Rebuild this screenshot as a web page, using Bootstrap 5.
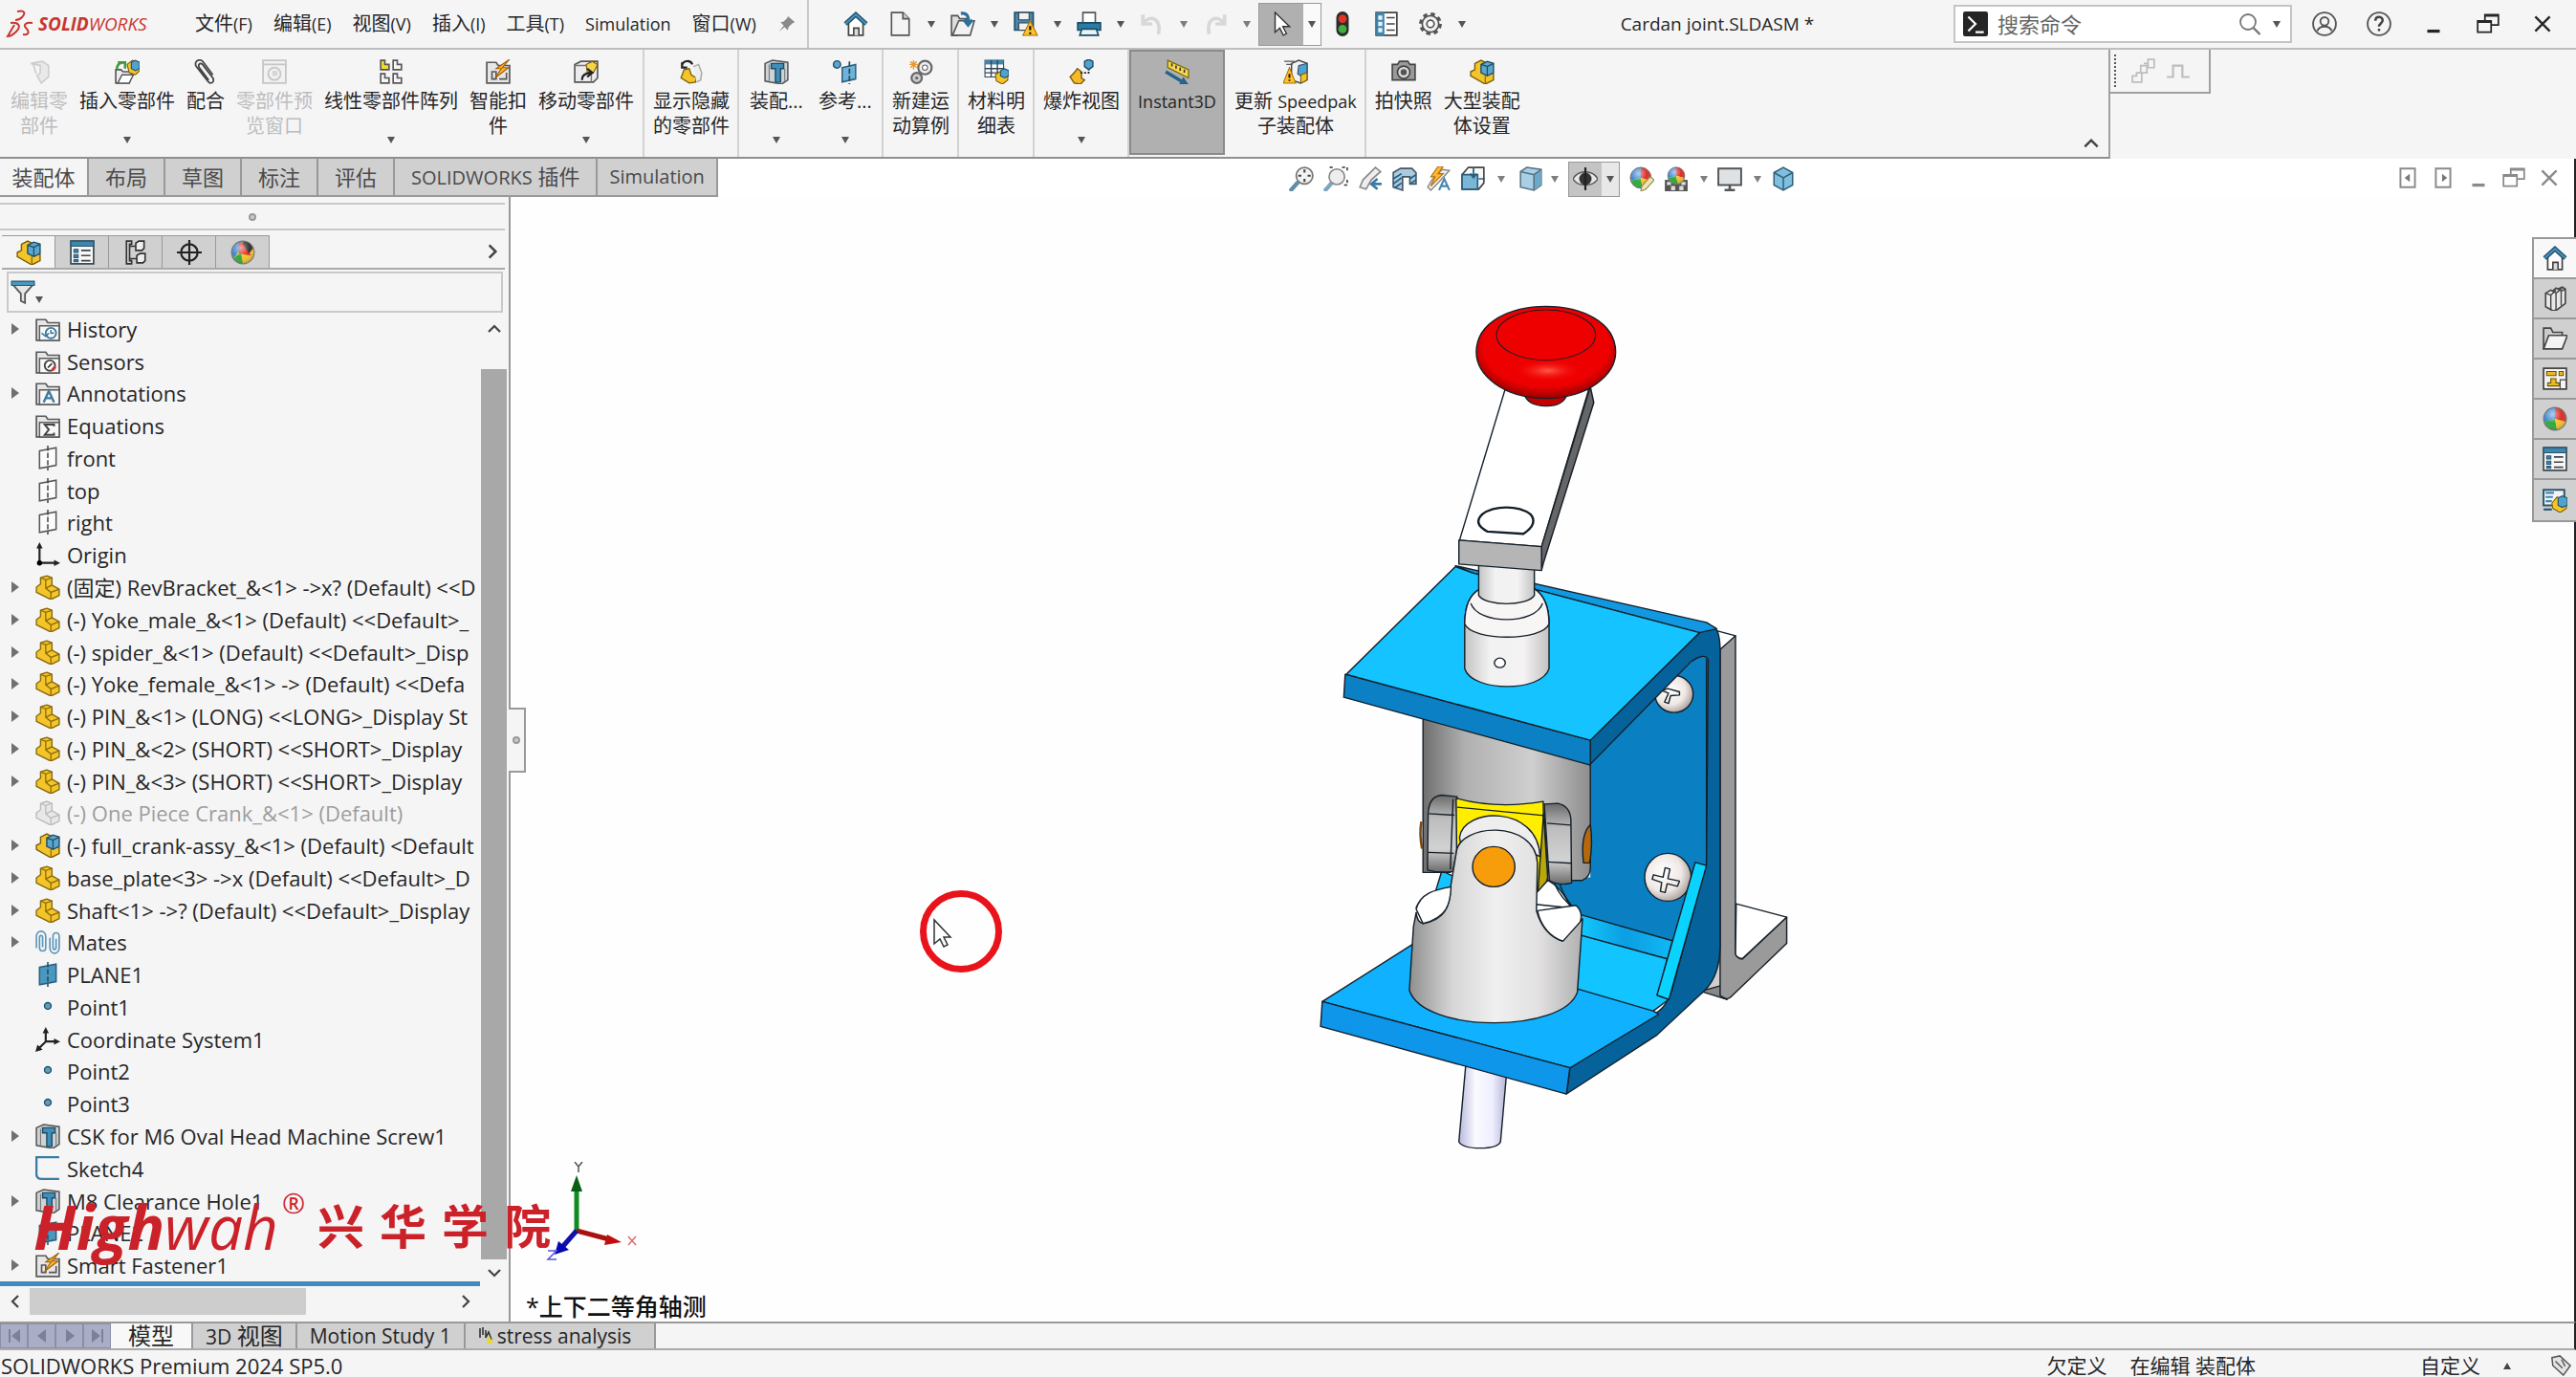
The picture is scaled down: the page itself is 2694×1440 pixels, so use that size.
<!DOCTYPE html>
<html lang="zh-CN">
<head>
<meta charset="utf-8">
<meta name="viewport" content="width=device-width, initial-scale=1">
<title>Cardan joint.SLDASM - SOLIDWORKS</title>
<link href="https://cdn.jsdelivr.net/npm/bootstrap@5.3.0/dist/css/bootstrap.min.css" rel="stylesheet">
<style>
:root{--face:#f5f5f6;--line:#a0a0a0;--soft:#c9c9c9;--tabgray:#d0d0d1;--ink:#262626}
body{font-family:"Open Sans","Noto Sans CJK SC",sans-serif;font-size:20px;line-height:26px;color:var(--ink);background:var(--face)}
button{border:0;background:none;padding:0;color:inherit;font:inherit;display:inline-flex;align-items:center;justify-content:center}
a{color:inherit;text-decoration:none}
svg{display:block;flex:none}
.ico{width:26px;height:26px}
.tri{width:8px;height:7px}
.latin{font-size:18px}
.titlebar{height:52px;border-bottom:2px solid #bdbdbd}
.brandmark{color:#c9352f;font-size:19px;font-style:italic;width:204px;padding-left:6px}
.mainmenu{gap:22px}
.quick{border-left:2px solid var(--soft);height:50px;padding-left:36px;margin-left:11px}
.quick .solo{margin-right:20px}
.quick .arrowed{gap:16px;margin-right:16px}
.cursorbox{border:1px solid #999;height:45px;margin-left:-8px;margin-right:9px}
.cursorbox .on{background:#b0b0b0;width:46px;height:100%}
.cursorbox .more{background:#fafafa;width:18px;height:100%}
.doctitle{font-size:19px}
.finder{width:354px;height:40px;border:2px solid #c4c4c4;background:#fff;padding:0 10px 0 8px}
.finder input{border:0;outline:0;background:none;font-size:22px;min-width:0;color:#555}
.finder input::placeholder{color:#666;opacity:1}
.winctl{gap:31px;padding:0 22px 0 21px}
.ribbonrow{height:114px}
.ribbon{width:2207px;border-right:2px solid var(--line);border-bottom:2px solid #8f8f8f}
.grp{padding:0 2px 0 3px;border-right:2px solid #d2d2d2}
.grp:first-child{padding-left:5px;padding-right:3px}
.grp:last-of-type{border:0}
.tool{flex-direction:column;justify-content:flex-start;padding:10px 6px 0;position:relative;text-align:center;height:110px}
.tool .cap{line-height:26px;margin-top:5px}
.tool .tri{position:absolute;bottom:12px;left:calc(50% - 4px)}
.tool.short{min-width:72px}
.tool.pressed{background:#b0b0b0;border:2px solid #8a8a8a;padding:8px 6px 0;width:100px}
.tool:disabled{color:#bdbdbd}
.floater{width:105px;height:46px;border-right:2px solid var(--line);border-bottom:2px solid var(--line);padding-left:4px;gap:10px}
.floater .grip{border-left:2px dotted #555;height:34px;margin-right:6px}
.tabrow{height:40px;background:#fff}
.cmdtab{height:40px;background:var(--tabgray);border-right:2px solid #999;border-bottom:2px solid #999;font-size:22px;padding:0 17px;color:#4a4a4a}
.cmdtab .latin{font-size:20px}
.cmdtab.on{background:var(--face);border-bottom-color:#999;width:93px;padding:0}
.hud{gap:10px;padding-left:597px;padding-top:2px}
.hud .eyebox{border:1px solid #999;height:37px;background:#c4c4c4}
.hud .eyebox .more{width:18px;height:100%;background:#e8e8e8}
.docctl{gap:11px;padding-right:13px;color:#8a8a8a}
.sidebar{width:534px;border-right:2px solid #999;position:relative;padding-top:6px}
.handle{height:29px;border-top:2px solid var(--soft);border-bottom:2px solid var(--soft);margin-right:4px}
.knob{width:8px;height:8px;border:2px solid #999;border-radius:50%;background:#ccc}
.mgr{height:36px;margin:5px 4px 0 2px;border-bottom:2px solid #aaa}
.mgr button{width:56px;background:var(--tabgray);border:2px solid #999;border-width:1px 1px 0 0}
.mgr button.on{background:var(--face)}
.mgr .expand{margin-left:auto;width:26px;background:none;border:0}
.filter{height:43px;border:2px solid var(--soft);margin:2px 6px 0 7px;padding-left:2px}
.filter input{border:0;background:none;outline:0;min-width:0}
.tree{font-size:22px;line-height:28px;border-bottom:5px solid #4489bd;width:502px}
.tree li{flex:1 1 0;min-height:0;white-space:nowrap}
.tree .tw{width:37px;padding-left:12px;flex:none}
.tree .tw svg{width:8px;height:12px}
.tree .ico{margin-right:7px}
.tree .off{color:#9d9d9d}
.vbar{width:27px;margin-right:2px}
.vbar .up{height:59px;padding-top:8px;align-items:flex-start}
.vbar .thumb{background:#a8a8a8}
.vbar .down{height:28px}
.hbar{height:28px;margin:2px 30px 7px 0}
.hbar .thumb{width:289px;background:#cdcdcd}
.hbar button{width:31px}
.splitter{position:absolute;left:532px;top:534px;width:18px;height:68px;border:2px solid #999;border-left:0;background:var(--face);z-index:2}
.view3d{background:#fefefe;position:relative}
.model{position:absolute;left:calc(50% - 273px);top:85px;width:560px;height:933px}
.pointer{position:absolute;left:calc(20% - 4px);top:725px;width:86px;height:86px}
.triad{position:absolute;left:30px;bottom:55px;width:110px;height:112px}
.viewname{position:absolute;left:16px;bottom:1px;font-size:25px;line-height:30px;color:#111;font-weight:500}
.taskpane{position:absolute;right:-2px;top:42px;width:46px;border:2px solid #999;border-right:0;z-index:2}
.taskpane button{height:42px;background:var(--tabgray);border-bottom:2px solid #999}
.taskpane button:first-child{background:#f8f8f8}
.taskpane button:last-child{border:0}
.rim{border-right:2px solid #222}
.watermark{position:absolute;left:35px;bottom:113px;z-index:5;color:#cb2129;height:88px;pointer-events:none}
.watermark .hw{font-size:64px;line-height:88px;font-style:italic}
.watermark .reg{font-size:29px;line-height:38px;margin-left:4px}
.watermark .cn{font-size:49px;line-height:86px;font-weight:700;gap:16px;margin-left:13px}
.sheets{height:30px;border-top:2px solid #999;border-bottom:2px solid #aaa;font-size:21px}
.sheets .nav4 button{width:29px;background:#a9adc6;border:1px solid #8a8ea8;color:#7d8198}
.sheets .sheet{background:var(--tabgray);border-right:2px solid #999;padding:0 13px}
.sheets .sheet.on{background:#f8f8f8;font-size:24px;padding:0 18px}
.sheets .cj{font-size:24px}
.statusbar{height:28px;font-size:22px;padding-left:1px;padding-top:4px;line-height:24px}
.statusbar .cj{font-size:21px}
.statusbar .custom{margin-left:172px}
</style>
</head>
<body class="vh-100 d-flex flex-column overflow-hidden position-relative">

<svg width="0" height="0" class="position-absolute" aria-hidden="true">
<defs>
<radialGradient id="gBall" cx=".4" cy=".3" r=".8"><stop offset="0" stop-color="#fff" stop-opacity=".6"/><stop offset=".5" stop-color="#fff" stop-opacity="0"/><stop offset="1" stop-opacity=".35"/></radialGradient>
<symbol id="tri" viewBox="0 0 8 7"><path d="M0 0h8L4 7z" fill="#555"/></symbol>
<symbol id="twist" viewBox="0 0 8 12"><path d="M0 0l8 6-8 6z" fill="#707070"/></symbol>
<symbol id="chev" viewBox="0 0 24 24"><path d="M8 4l8 8-8 8" fill="none" stroke="#444" stroke-width="3"/></symbol>
<symbol id="home" viewBox="0 0 24 24"><path d="M5 11v12h14V11l-7-7z" fill="#fff" stroke="#444" stroke-width="1.6"/><path d="M10 23v-7h5v7" fill="#ddd" stroke="#444" stroke-width="1.5"/><path d="M2 12L12 3l10 9" fill="none" stroke="#1f4f6b" stroke-width="4.4"/><path d="M2 12L12 3l10 9" fill="none" stroke="#4a90b8" stroke-width="2"/></symbol>
<symbol id="doc" viewBox="0 0 24 24"><path d="M4 1h11l6 6v16H4z" fill="#f4f4f4" stroke="#555" stroke-width="1.5"/><path d="M15 1v6h6" fill="#ccc" stroke="#555" stroke-width="1.5"/></symbol>
<symbol id="open" viewBox="0 0 24 24"><path d="M1 23V4h6l2 3h6v5l-8 11z" fill="#ddd" stroke="#555" stroke-width="1.5"/><path d="M2 23L8 9h15l-4 14z" fill="#f2f2f2" stroke="#555" stroke-width="1.5"/><path d="M10 2c6-1 8 3 7 9m-4-3l4 5 4-5" fill="none" stroke="#2a7299" stroke-width="3"/></symbol>
<symbol id="save" viewBox="0 0 24 24"><path d="M1 1h18v17H1z" fill="#4b87a8" stroke="#234f68" stroke-width="1.5"/><path d="M5 1h10v7H5zM5 11h10v7H5z" fill="#f2f2f2" stroke="#345"/><path d="M16 9l7 14H9z" fill="#ffc22c" stroke="#a87300"/><path d="M16 14v4m0 2v2" stroke="#111" stroke-width="2"/></symbol>
<symbol id="print" viewBox="0 0 24 24"><path d="M6 1h12v10H6z" fill="#fff" stroke="#555" stroke-width="1.5"/><path d="M1 11h22v7H1z" fill="#2e7ba6" stroke="#1b4c66" stroke-width="1.5"/><path d="M5 17h14l2 6H3z" fill="#e9f3f8" stroke="#1b4c66" stroke-width="1.5"/></symbol>
<symbol id="undo" viewBox="0 0 24 24"><path d="M3 3v9h9M4 11C10 3 21 6 18 22" fill="none" stroke="#cfcfcf" stroke-width="3.4"/></symbol>
<symbol id="cursor" viewBox="0 0 24 24"><path d="M6 1v19l4.500-4 3.500 7 3-1.500-3.500-7H20z" fill="#fff" stroke="#333" stroke-width="1.3"/></symbol>
<symbol id="traffic" viewBox="0 0 24 24"><rect x="6" y="0" width="12" height="24" rx="6" fill="#2c2c2c"/><circle cx="12" cy="7" r="4" fill="#e33323"/><circle cx="12" cy="17" r="4" fill="#3fb13b"/></symbol>
<symbol id="list" viewBox="0 0 24 24"><path d="M2 1h20v22H2z" fill="#fff" stroke="#444" stroke-width="1.6"/><path d="M2 1h8v22H2z" fill="#3f86ad"/><path d="M4 4h4v4H4zM4 10h4v4H4zM4 16h4v4H4z" fill="#e6f2f8"/><path d="M12 6h8M12 12h8M12 18h8" stroke="#444" stroke-width="1.6"/></symbol>
<symbol id="props" viewBox="0 0 24 24"><path d="M1 1h22v22H1z" fill="#f7f7f7" stroke="#3d4a52" stroke-width="1.6"/><path d="M1 1h22v5H1z" fill="#3f86ad" stroke="#27566f"/><path d="M4 9h4v3H4zM4 14h4v3H4zM4 19h4v2H4z" fill="#3f86ad" stroke="#27566f"/><path d="M11 10h9M11 15h9M11 20h9" stroke="#444" stroke-width="1.5"/></symbol>
<symbol id="gear" viewBox="0 0 24 24"><circle cx="12" cy="12" r="9.500" fill="none" stroke="#555" stroke-width="3" stroke-dasharray="4 3.460"/><circle cx="12" cy="12" r="8" fill="#f3f3f3" stroke="#555" stroke-width="1.6"/><circle cx="12" cy="12" r="3.500" fill="#fff" stroke="#555" stroke-width="1.6"/></symbol>
<symbol id="prompt" viewBox="0 0 24 24"><rect width="24" height="24" rx="2" fill="#262626"/><path d="M5 5l7 7-7 7M12 20h8" fill="none" stroke="#fff" stroke-width="2"/></symbol>
<symbol id="mag" viewBox="0 0 24 24"><circle cx="10" cy="10" r="8" fill="none" stroke="#777" stroke-width="1.8"/><path d="M15.500 16l7 7" stroke="#777" stroke-width="2.400"/></symbol>
<symbol id="user" viewBox="0 0 24 24"><circle cx="12" cy="12" r="11" fill="none" stroke="#555" stroke-width="1.700"/><circle cx="12" cy="9.500" r="4" fill="none" stroke="#555" stroke-width="1.700"/><path d="M5 19c2-6 12-6 14 0" fill="none" stroke="#555" stroke-width="1.700"/></symbol>
<symbol id="help" viewBox="0 0 24 24"><circle cx="12" cy="12" r="11" fill="none" stroke="#555" stroke-width="1.700"/><path d="M8.500 9c0-5 7-4.500 7-.5 0 3-3.500 3-3.500 6m0 2v2.500" fill="none" stroke="#444" stroke-width="2.300"/></symbol>
<symbol id="wmin" viewBox="0 0 24 24"><path d="M6 19h12" stroke="currentColor" stroke-width="3"/></symbol>
<symbol id="wres" viewBox="0 0 24 24"><path d="M9 9V3h13v10h-7M2 9h13v11H2z" fill="none" stroke="currentColor" stroke-width="1.600"/><path d="M9 4h13M2 10h13" stroke="currentColor" stroke-width="2"/></symbol>
<symbol id="wclose" viewBox="0 0 24 24"><path d="M5 5l14 14M19 5L5 19" stroke="currentColor" stroke-width="2.200"/></symbol>
<symbol id="part" viewBox="0 0 24 24"><path d="M1 12l4-3V3l6-2 5 2v7l7 4v6l-8 4L1 17z" fill="#f3c52a" stroke="#8a6a0a" stroke-width="1.300" stroke-linejoin="round"/><path d="M5 3l5 2 6-2M10 5v8l5 4 8-3M15 17v7M10 13l6-3" fill="none" stroke="#8a6a0a" stroke-width="1.200"/></symbol>
<symbol id="partoff" viewBox="0 0 24 24"><path d="M1 12l4-3V3l6-2 5 2v7l7 4v6l-8 4L1 17z" fill="#e8e8e8" stroke="#bbb" stroke-width="1.300"/><path d="M5 3l5 2 6-2M10 5v8l5 4 8-3M15 17v7M10 13l6-3" fill="none" stroke="#bbb" stroke-width="1.200"/></symbol>
<symbol id="asm" viewBox="0 0 24 24"><path d="M1 12l4-2V4l6-3 4 2v8l8 3v6l-8 4L1 16z" fill="#f3c52a" stroke="#7a5d08" stroke-width="1.300"/><path d="M11 5l6-3 6 2v9l-6 3-6-3z" fill="#5ba7cf" stroke="#1f4b64" stroke-width="1.300"/><path d="M11 5l6 2 6-3M17 7v9" fill="none" stroke="#1f4b64" stroke-width="1.200"/><path d="M15 16v8" stroke="#7a5d08"/></symbol>
<symbol id="folder" viewBox="0 0 24 24"><path d="M1 23V3h9l2 3h11v17z" fill="#e6e6e6" stroke="#5a5a5a" stroke-width="1.600"/><path d="M4 9h19v14H4z" fill="#f8f8f8" stroke="#5a5a5a" stroke-width="1.400"/></symbol>
<symbol id="fHist" viewBox="0 0 24 24"><use href="#folder"/><circle cx="15" cy="16" r="5" fill="#fff" stroke="#3f7a9c" stroke-width="1.700"/><path d="M15 13v3h3M6 16l4 3 3-3" fill="none" stroke="#3f7a9c" stroke-width="1.500"/></symbol>
<symbol id="fSens" viewBox="0 0 24 24"><use href="#folder"/><circle cx="14" cy="16" r="5" fill="#fff" stroke="#444" stroke-width="1.700"/><path d="M12 18l4-4" stroke="#333" stroke-width="1.600"/><path d="M16 20a5 5 0 0 0 3-3" stroke="#d33" stroke-width="3" fill="none"/></symbol>
<symbol id="fAnn" viewBox="0 0 24 24"><use href="#folder"/><path d="M8 21l5-11 5 11M10 17h7" fill="none" stroke="#3f7a9c" stroke-width="2.200"/></symbol>
<symbol id="fEq" viewBox="0 0 24 24"><use href="#folder"/><path d="M18 13v-2H9l4 5-4 5h9v-2" fill="none" stroke="#444" stroke-width="1.800"/></symbol>
<symbol id="plane" viewBox="0 0 24 24"><path d="M4 5l16-3v17L4 22z" fill="#fcfcfc" stroke="#555" stroke-width="1.400"/><path d="M12 0v24" stroke="#444" stroke-width="1.400" stroke-dasharray="5 2"/></symbol>
<symbol id="planeb" viewBox="0 0 24 24"><path d="M4 5l16-3v17L4 22z" fill="#4b97be" stroke="#2a5f7d" stroke-width="1.400"/><path d="M12 0v24" stroke="#1f4b64" stroke-width="1.400" stroke-dasharray="5 2"/></symbol>
<symbol id="origin" viewBox="0 0 24 24"><path d="M4 4v16h16" fill="none" stroke="#222" stroke-width="2"/><path d="M4 0l3 6H1zM24 20l-6 3v-6z" fill="#222"/><circle cx="4" cy="20" r="2.500"/></symbol>
<symbol id="coord" viewBox="0 0 24 24"><path d="M10 4v10h10M10 14l-7 7" fill="none" stroke="#222" stroke-width="2"/><path d="M10 0l3 6H7zM24 14l-6 3v-6zM0 24l2-7 5 5z" fill="#222"/></symbol>
<symbol id="mates" viewBox="0 0 24 24"><path d="M1 7v11M1 7c0-7 9-7 9 0v10c0 5-6 5-6 0V8c0-3 3-3 3 0v9M14 8v9c0 8 9 8 9 0V7c0-5-6-5-6 0v10c0 3 3 3 3 0V9" fill="none" stroke="#5a95b8" stroke-width="1.500"/></symbol>
<symbol id="point" viewBox="0 0 24 24"><circle cx="12" cy="11" r="3.200" fill="#5f9cc0" stroke="#234f68" stroke-width="1.300"/></symbol>
<symbol id="hole" viewBox="0 0 24 24"><path d="M1 4l7-3 15 2v17l-6 4-16-3z" fill="#cfd3d6" stroke="#555" stroke-width="1.400"/><path d="M5 5v16M20 9v12" stroke="#777"/><path d="M7 4h12v5h-3v13h-5V9H7z" fill="#3f8fb9" stroke="#1f4b64" stroke-width="1.300"/></symbol>
<symbol id="sketch" viewBox="0 0 24 24"><path d="M23 1H1v16q0 5 5 5h17" fill="none" stroke="#3c7ba3" stroke-width="2.200"/></symbol>
<symbol id="smart" viewBox="0 0 24 24"><path d="M1 23V3h9l2 3h11v17z" fill="#e6e6e6" stroke="#5a5a5a" stroke-width="1.600"/><path d="M6 12h4v7H6zM13 19h7v-6" fill="none" stroke="#555" stroke-width="1.500"/><path d="M23 0L10 9h5l-6 9 13-10h-6z" fill="#ffb62e" stroke="#a35d00"/></symbol>
<symbol id="editp" viewBox="0 0 24 24"><path d="M4 4l9 2v7l-3 3 4 7 7-6V6l-6-4zM6 4l3 10" fill="#e9e9e9" stroke="#cdcdcd" stroke-width="1.500"/></symbol>
<symbol id="insert" viewBox="0 0 24 24"><path d="M1 23V10h5l2 2h9l-3 11z" fill="#eee" stroke="#555" stroke-width="1.500"/><path d="M3 23l4-8h11l-4 8z" fill="#fff" stroke="#555" stroke-width="1.300"/><path d="M2 10c0-5 3-7 7-7M3 3h7v6" fill="none" stroke="#3e9a3a" stroke-width="2.400"/><path d="M12 5l5-4 7 2v8l-4 4-6-2z" fill="#f3c52a" stroke="#7a5d08"/><path d="M16 3l4-2 4 2v6l-4 2-4-2z" fill="#4fa3d1" stroke="#1f4b64"/></symbol>
<symbol id="clip" viewBox="0 0 24 24"><path d="M15 20L6 8C4 5 7 3 9 5l10 13c2 4-2 7-5 3L3 7C0 2 7-2 10 3l9 12" fill="none" stroke="#444" stroke-width="1.600"/></symbol>
<symbol id="preview" viewBox="0 0 24 24"><path d="M1 1h22v22H1zM1 5h22" fill="#f1f1f1" stroke="#c6c6c6" stroke-width="1.700"/><circle cx="12" cy="14" r="6" fill="none" stroke="#c6c6c6" stroke-width="1.700"/><path d="M10 11h5v5h-5z" fill="#d6d6d6"/></symbol>
<symbol id="pattern" viewBox="0 0 24 24"><path d="M2 1h4v4h4v5H2z" fill="#f3dc2a" stroke="#555" stroke-width="1.500"/><path d="M14 1h4v4h4v5h-8zM2 14h4v4h4v5H2zM14 14h4v4h4v5h-8z" fill="#f6f6f6" stroke="#555" stroke-width="1.500"/></symbol>
<symbol id="move" viewBox="0 0 24 24"><path d="M1 5l6-3h16v16l-4 4H1z" fill="#ececec" stroke="#555" stroke-width="1.500"/><path d="M1 6h16v16" fill="none" stroke="#777" stroke-width="1.300"/><path d="M12 5l6-3 5 3-4 8-6-1z" fill="#f3d54a" stroke="#7a5d08"/><path d="M8 20c0-5 4-7 9-7m-4-4l5 4-5 4" fill="none" stroke="#222" stroke-width="2"/></symbol>
<symbol id="showhide" viewBox="0 0 24 24"><path d="M2 18l3-8 5-1 2 6 5 3-1 4-6 1z" fill="#f3c52a" stroke="#7a5d08" stroke-width="1.200"/><path d="M14 7l5-2 3 8-1 7-4 2" fill="#eee" stroke="#aaa" stroke-width="1.400"/><path d="M3 7c0-6 8-7 10-2M3 3v5h5" fill="none" stroke="#222" stroke-width="2"/></symbol>
<symbol id="refg" viewBox="0 0 24 24"><circle cx="4" cy="5" r="3.500" fill="#5ba7cf" stroke="#1f4b64" stroke-width="1.300"/><path d="M9 8l13-3v14L9 22z" fill="#6fb4d8" stroke="#2a5f7d" stroke-width="1.400"/><path d="M16 2v22" stroke="#1f4b64" stroke-width="1.600" stroke-dasharray="5 2"/></symbol>
<symbol id="motion" viewBox="0 0 24 24"><circle cx="16" cy="8" r="6.500" fill="#eee" stroke="#666" stroke-width="2"/><circle cx="16" cy="8" r="2.500" fill="#fff" stroke="#666"/><circle cx="8" cy="18" r="5" fill="#ccc" stroke="#666" stroke-width="2"/><circle cx="8" cy="18" r="1.500" fill="#666"/><path d="M5 1v9M1 5h9M2 2l6 6M8 2L2 8" stroke="#e8972b" stroke-width="1.300"/></symbol>
<symbol id="bom" viewBox="0 0 24 24"><path d="M1 1h18v16H1z" fill="#fff" stroke="#345"/><path d="M1 1h18v4H1z" fill="#3f86ad"/><path d="M1 9h18M1 13h18M7 1v16M13 1v16" stroke="#345" stroke-width="1.300"/><path d="M11 15l4-3 8 1v7l-5 4-6-3z" fill="#f3c52a" stroke="#7a5d08"/><path d="M16 11l4-2 4 2v5l-4 2-4-2z" fill="#4fa3d1" stroke="#1f4b64"/></symbol>
<symbol id="explode" viewBox="0 0 24 24"><path d="M1 17l4-4 3-4 4 3v6l3 2-4 4-6-1z" fill="#f3b92a" stroke="#7a5d08" stroke-width="1.300"/><path d="M15 2l4-2 4 2v5l-4 3-4-3z" fill="#4fa3d1" stroke="#1f4b64" stroke-width="1.300"/><path d="M11 13h8v-3" fill="none" stroke="#222" stroke-dasharray="2 1.500" stroke-width="1.500"/></symbol>
<symbol id="instant" viewBox="0 0 24 24"><path d="M3 1l20 9v8L3 8z" fill="#f8d84a" stroke="#7a6a10" stroke-width="1.200"/><path d="M7 4v3M11 6v3M15 8v3M19 10v3" stroke="#333" stroke-width="1.500"/><path d="M1 12l15 9" stroke="#24648a" stroke-width="3"/><path d="M23 24l-9 0 4-7z" fill="#24648a"/></symbol>
<symbol id="speed" viewBox="0 0 24 24"><path d="M8 4l7-3 8 3v16l-6 3-9-3z" fill="#f2f2f2" stroke="#444" stroke-width="1.300"/><path d="M15 6l8-2v9l-6 3-3-2z" fill="#4fa3d1" stroke="#1f4b64"/><path d="M17 15l6-2v7l-6 3z" fill="#f3c52a" stroke="#7a5d08"/><path d="M6 8l6 15H0z" fill="#ffc22c" stroke="#a87300"/><path d="M6 14v4m0 1.500V21" stroke="#111" stroke-width="1.800"/><path d="M1 2h10M3 5h6" stroke="#555" stroke-width="1.300"/></symbol>
<symbol id="camera" viewBox="0 0 24 24"><path d="M1 5h5l2-3h8l2 3h5v15H1z" fill="#9a9a9a" stroke="#444" stroke-width="1.500"/><circle cx="12" cy="12.500" r="6" fill="#ddd" stroke="#444" stroke-width="1.600"/><circle cx="12" cy="12.500" r="3" fill="#555"/></symbol>
<symbol id="zfit" viewBox="0 0 24 24"><path d="M9 15l-8 9" stroke="#5f8dab" stroke-width="4"/><circle cx="15" cy="9" r="8" fill="#f3f3f3" stroke="#777" stroke-width="1.600"/><path d="M15 3v3M15 12v3M9 9h3M18 9h3" stroke="#444" stroke-width="2"/></symbol>
<symbol id="zarea" viewBox="0 0 24 24"><path d="M9 1H6M23 4V1h-5M23 13v5h-3" fill="none" stroke="#333" stroke-width="1.400" stroke-dasharray="3 2"/><path d="M8 16l-7 8" stroke="#7da6bf" stroke-width="4"/><circle cx="13" cy="10" r="7.500" fill="#eee" stroke="#888" stroke-width="1.500"/></symbol>
<symbol id="prev" viewBox="0 0 24 24"><path d="M17 1l5 4-9 8-5 9-6-2 3-7z" fill="#eee" stroke="#888" stroke-width="1.500"/><path d="M23 17h-8m4-5l-6 5 6 5" fill="none" stroke="#3c7ba3" stroke-width="2.500"/></symbol>
<symbol id="section" viewBox="0 0 24 24"><path d="M1 6l7-4h11l4 4v11h-6v-7H10v13l-9-3z" fill="#a9cbdd" stroke="#456" stroke-width="1.500"/><path d="M1 12l8-5M1 17l8-6M2 21l7-5M17 12l6-4M17 17l6-4" stroke="#1f5c80" stroke-width="1.500"/></symbol>
<symbol id="dynann" viewBox="0 0 24 24"><path d="M15 3l7 1-10 11-8 8-3-3 4-7z" fill="#eee" stroke="#888" stroke-width="1.300"/><path d="M11 0L4 10h4l-4 9 12-12h-5l5-7z" fill="#ffb62e" stroke="#b06d10"/><path d="M12 23l5-11 5 11m-8-4h7" fill="none" stroke="#4a88b0" stroke-width="2"/></symbol>
<symbol id="orient" viewBox="0 0 24 24"><path d="M7 1h15v15l-5 6H1V8z" fill="#f8f8f8" stroke="#444" stroke-width="1.500"/><path d="M1 8h15v14H1z" fill="#7ab6d6" stroke="#2a5f7d" stroke-width="1.500"/><path d="M12 1v9m-3-3l3 4 3-4M23 12h-6" fill="none" stroke="#2a5f7d" stroke-width="1.600"/></symbol>
<symbol id="dispst" viewBox="0 0 24 24"><path d="M2 5l6-4 14 2v15l-7 5L2 20z" fill="#a7d0e6" stroke="#56707e" stroke-width="1.400"/><path d="M15 8l7-5v15l-7 5z" fill="#6fa9c9"/><path d="M2 5l13 3 7-5M15 8v15" fill="none" stroke="#56707e" stroke-width="1.400"/></symbol>
<symbol id="eye" viewBox="0 0 24 24"><path d="M0 12C5 3 19 3 24 12 19 20 5 20 0 12z" fill="#e8e8e8" stroke="#555" stroke-width="1.300"/><circle cx="12" cy="12" r="6" fill="#333"/><path d="M12 1v22" stroke="#222" stroke-width="2"/></symbol>
<symbol id="ball" viewBox="0 0 24 24"><path d="M12 12V1a11 11 0 0 1 10.500 14z" fill="#d92f26"/><path d="M12 12V1A11 11 0 0 0 1.500 15z" fill="#3f86d0"/><path d="M12 12L1.500 15A11 11 0 0 0 14 23z" fill="#2fa83a"/><path d="M12 12l10.500 3A11 11 0 0 1 14 23z" fill="#f2c32c"/><circle cx="12" cy="12" r="11" fill="url(#gBall)" stroke="#777"/></symbol>
<symbol id="ballfm" viewBox="0 0 24 24"><circle cx="12" cy="12" r="11" fill="#f2c32c"/><path d="M12 1A11 11 0 0 0 3 18l6-8z" fill="#3f86d0"/><path d="M3 18l7-6 2 11A11 11 0 0 1 3 18z" fill="#2fa83a"/><path d="M8 2l5 1 7 12-12-2z" fill="#d92f26"/><path d="M12 1c5 0 9 3 10 7l-4 5-6-9z" fill="#333"/><circle cx="12" cy="12" r="11" fill="url(#gBall)" stroke="#777"/></symbol>
<symbol id="balled" viewBox="0 0 24 24"><use href="#ball" width="22" height="22"/><path d="M11 24l1-5 8-9 4 3-8 9z" fill="#f6e2b0" stroke="#885"/></symbol>
<symbol id="scene" viewBox="0 0 24 24"><path d="M1 13h22v11H1z" fill="#555"/><path d="M3 15h4v3H3zM17 15h4v3h-4zM7 19h4v4H7zM15 19h4v4h-4z" fill="#ddd"/><use href="#ball" x="3" width="18" height="18"/></symbol>
<symbol id="monitor" viewBox="0 0 24 24"><path d="M1 2h22v16H1z" fill="#dfe2e4" stroke="#555" stroke-width="1.800"/><path d="M12 18v4M7 23h10" stroke="#555" stroke-width="2.400"/></symbol>
<symbol id="cube" viewBox="0 0 24 24"><path d="M3 6l9-5 9 5v12l-9 5-9-5z" fill="#7fbfe0" stroke="#33617a" stroke-width="1.400"/><path d="M3 6l9 5 9-5M12 11v12" fill="none" stroke="#33617a" stroke-width="1.400"/></symbol>
<symbol id="pageL" viewBox="0 0 24 24"><path d="M5 3h14v18H5z" fill="none" stroke="#8a8a8a" stroke-width="1.800"/><path d="M14 8v8l-5-4z" fill="#777"/></symbol>
<symbol id="pageR" viewBox="0 0 24 24"><path d="M5 3h14v18H5z" fill="none" stroke="#8a8a8a" stroke-width="1.800"/><path d="M11 8v8l5-4z" fill="#777"/></symbol>
<symbol id="config" viewBox="0 0 24 24"><path d="M3 1h5v3H6v16h2v3H3zM6 6h7M6 18h7" fill="none" stroke="#333" stroke-width="1.500"/><path d="M12 3l3-2h5v7l-2 2h-6zM13 15l3-2h5v7l-2 2h-6z" fill="#eee" stroke="#333" stroke-width="1.500"/></symbol>
<symbol id="target" viewBox="0 0 24 24"><circle cx="12" cy="12" r="8" fill="none" stroke="#222" stroke-width="2"/><path d="M12 0v24M0 12h24" stroke="#222" stroke-width="2"/></symbol>
<symbol id="funnel" viewBox="0 0 24 24"><path d="M2 4h20l-8 9v9l-4-2v-7z" fill="#e6e6e6" stroke="#555" stroke-width="1.600"/><path d="M1 1h22v4H1z" fill="#4b97be" stroke="#27566f"/></symbol>
<symbol id="books" viewBox="0 0 24 24"><path d="M3 7l5-3 2 1 3-3 2 1 4-2 3 2v14l-8 6-4 1-7-4z" fill="#e9e9e9" stroke="#444" stroke-width="1.500"/><path d="M3 7l5 2 5-5M8 9v14M10 5l3 2 6-5M13 7v16M15 3l3 2 4-2M18 5v14" fill="none" stroke="#444" stroke-width="1.300"/></symbol>
<symbol id="fold2" viewBox="0 0 24 24"><path d="M1 22V2h7l2 4h9v4" fill="#ccc" stroke="#444" stroke-width="1.500"/><path d="M1 22L6 9h18l-5 13z" fill="#f4f4f4" stroke="#444" stroke-width="1.500"/></symbol>
<symbol id="palette" viewBox="0 0 24 24"><path d="M1 2h22v20H1z" fill="#f4f4f4" stroke="#444" stroke-width="1.600"/><path d="M4 5h9v4H4zM16 5h4v4h-4zM5 19v-3h3v-4h5v4h3v3z" fill="#e8bb25" stroke="#6c5408"/><path d="M17 22v-9h6" fill="none" stroke="#444"/></symbol>
<symbol id="forum" viewBox="0 0 24 24"><path d="M1 2h20v15H1z" fill="#f4f4f4" stroke="#27566f" stroke-width="1.800"/><path d="M3 5h8M3 9h7M3 13h6" stroke="#3f86ad" stroke-width="2"/><path d="M1 21h8" stroke="#27566f" stroke-width="2"/><path d="M9 15l5-6 9 4v7l-6 4-7-4z" fill="#f3c52a" stroke="#7a5d08"/><path d="M15 10l4-2 5 2v7l-5 2-4-2z" fill="#4fa3d1" stroke="#1f4b64"/></symbol>
<symbol id="tag" viewBox="0 0 24 24"><path d="M2 3l9-2 12 11-8 11L3 12z" fill="#e4e4e4" stroke="#555" stroke-width="1.600"/><path d="M6 7l8 8M13 5l4 8" stroke="#555" stroke-width="1.500"/></symbol>
<symbol id="pin" viewBox="0 0 24 24"><path d="M13 2l9 8-3 1-5 5-1 4-4-4-7 6 6-8-4-4 4-1 5-5z" fill="#8a8a8a"/></symbol>
</defs>
</svg>

<header class="titlebar d-flex align-items-center flex-shrink-0">
  <a href="#" class="brandmark d-flex align-items-center gap-1">
    <svg width="30" height="30" viewBox="0 0 30 30" fill="none" stroke="#c9352f" stroke-width="2"><path d="M12 2c8-2 9 2 5 6-3 3-5 3-7 3M5 14c8-1 12 3 6 9-3 3-6 5-9 5l7-12M28 14c-7-1-10 2-7 5s5 8-3 7"/></svg>
    <span><b>SOLID</b>WORKS</span></a>
  <nav class="mainmenu d-flex align-items-center">
    <a href="#">文件<span class="latin">(F)</span></a><a href="#">编辑<span class="latin">(E)</span></a><a href="#">视图<span class="latin">(V)</span></a><a href="#">插入<span class="latin">(I)</span></a><a href="#">工具<span class="latin">(T)</span></a><a href="#"><span class="latin">Simulation</span></a><a href="#">窗口<span class="latin">(W)</span></a>
    <button aria-label="固定"><svg width="20" height="22"><use href="#pin"/></svg></button>
  </nav>
  <div class="quick d-flex align-items-center">
    <button class="solo" aria-label="主页"><svg class="ico"><use href="#home"/></svg></button>
    <button class="arrowed" aria-label="新建"><svg class="ico"><use href="#doc"/></svg><svg class="tri"><use href="#tri"/></svg></button>
    <button class="arrowed" aria-label="打开"><svg class="ico"><use href="#open"/></svg><svg class="tri"><use href="#tri"/></svg></button>
    <button class="arrowed" aria-label="保存"><svg class="ico"><use href="#save"/></svg><svg class="tri"><use href="#tri"/></svg></button>
    <button class="arrowed" aria-label="打印"><svg class="ico"><use href="#print"/></svg><svg class="tri"><use href="#tri"/></svg></button>
    <button class="arrowed opacity-75" aria-label="撤消"><svg class="ico"><use href="#undo"/></svg><svg class="tri"><use href="#tri"/></svg></button>
    <button class="arrowed opacity-75" aria-label="重做"><svg class="ico" viewBox="0 0 24 24"><use href="#undo" transform="matrix(-1 0 0 1 24 0)"/></svg><svg class="tri"><use href="#tri"/></svg></button>
    <div class="cursorbox d-flex"><button class="on" aria-label="选择"><svg class="ico"><use href="#cursor"/></svg></button><button class="more" aria-label="选择选项"><svg class="tri"><use href="#tri"/></svg></button></div>
    <button class="solo" aria-label="重建"><svg class="ico"><use href="#traffic"/></svg></button>
    <button class="solo" aria-label="文件属性"><svg class="ico"><use href="#list"/></svg></button>
    <button class="arrowed" aria-label="选项"><svg class="ico"><use href="#gear"/></svg><svg class="tri"><use href="#tri"/></svg></button>
  </div>
  <div class="doctitle ms-auto me-auto">Cardan joint.SLDASM *</div>
  <label class="finder d-flex align-items-center gap-2"><svg class="ico"><use href="#prompt"/></svg><input class="flex-grow-1" type="text" placeholder="搜索命令" aria-label="搜索命令"><svg width="24" height="26"><use href="#mag"/></svg><svg class="tri ms-1"><use href="#tri"/></svg></label>
  <div class="winctl d-flex align-items-center">
    <button aria-label="登录"><svg class="ico"><use href="#user"/></svg></button><button aria-label="帮助"><svg class="ico"><use href="#help"/></svg></button><button aria-label="最小化"><svg class="ico"><use href="#wmin"/></svg></button><button aria-label="还原"><svg class="ico"><use href="#wres"/></svg></button><button aria-label="关闭"><svg class="ico"><use href="#wclose"/></svg></button>
  </div>
</header>

<div class="ribbonrow d-flex flex-shrink-0">
  <div class="ribbon d-flex">
    <div class="grp d-flex">
      <button class="tool" disabled><svg class="ico"><use href="#editp"/></svg><span class="cap">编辑零<br>部件</span></button>
      <button class="tool"><svg class="ico"><use href="#insert"/></svg><span class="cap">插入零部件</span><svg class="tri"><use href="#tri"/></svg></button>
      <button class="tool"><svg class="ico"><use href="#clip"/></svg><span class="cap">配合</span></button>
      <button class="tool" disabled><svg class="ico"><use href="#preview"/></svg><span class="cap">零部件预<br>览窗口</span></button>
      <button class="tool"><svg class="ico"><use href="#pattern"/></svg><span class="cap">线性零部件阵列</span><svg class="tri"><use href="#tri"/></svg></button>
      <button class="tool"><svg class="ico"><use href="#smart"/></svg><span class="cap">智能扣<br>件</span></button>
      <button class="tool"><svg class="ico"><use href="#move"/></svg><span class="cap">移动零部件</span><svg class="tri"><use href="#tri"/></svg></button>
    </div>
    <div class="grp d-flex"><button class="tool"><svg class="ico"><use href="#showhide"/></svg><span class="cap">显示隐藏<br>的零部件</span></button></div>
    <div class="grp d-flex">
      <button class="tool short"><svg class="ico"><use href="#hole"/></svg><span class="cap">装配...</span><svg class="tri"><use href="#tri"/></svg></button>
      <button class="tool short"><svg class="ico"><use href="#refg"/></svg><span class="cap">参考...</span><svg class="tri"><use href="#tri"/></svg></button>
    </div>
    <div class="grp d-flex"><button class="tool"><svg class="ico"><use href="#motion"/></svg><span class="cap">新建运<br>动算例</span></button></div>
    <div class="grp d-flex"><button class="tool"><svg class="ico"><use href="#bom"/></svg><span class="cap">材料明<br>细表</span></button></div>
    <div class="grp d-flex"><button class="tool"><svg class="ico"><use href="#explode"/></svg><span class="cap">爆炸视图</span><svg class="tri"><use href="#tri"/></svg></button></div>
    <button class="tool pressed"><svg class="ico"><use href="#instant"/></svg><span class="cap latin">Instant3D</span></button>
    <div class="grp d-flex ps-1"><button class="tool"><svg class="ico"><use href="#speed"/></svg><span class="cap">更新 <span class="latin">Speedpak</span><br>子装配体</span></button></div>
    <div class="grp d-flex">
      <button class="tool"><svg class="ico"><use href="#camera"/></svg><span class="cap">拍快照</span></button>
      <button class="tool"><svg class="ico"><use href="#asm"/></svg><span class="cap">大型装配<br>体设置</span></button>
    </div>
    <button class="ms-auto align-self-end me-2 mb-1" aria-label="折叠"><svg width="20" height="20" viewBox="0 0 24 24"><use href="#chev" transform="rotate(-90 12 12)"/></svg></button>
  </div>
  <div class="floater d-flex align-items-center">
    <span class="grip"></span>
    <button disabled aria-label="爆炸直线"><svg class="ico" viewBox="0 0 24 24" fill="none" stroke="#bdbdbd" stroke-width="1.600"><path d="M1 23v-6h4v-3h5v9zM9 14V7h6v7zM16 1h6v8h-6zM12 5h4"/></svg></button>
    <button disabled aria-label="步路线"><svg class="ico" viewBox="0 0 24 24" fill="none" stroke="#bdbdbd" stroke-width="2"><path d="M1 18h6V7h9v11h7"/></svg></button>
  </div>
</div>

<div class="tabrow d-flex flex-shrink-0 rim">
  <button class="cmdtab on">装配体</button><button class="cmdtab">布局</button><button class="cmdtab">草图</button><button class="cmdtab">标注</button><button class="cmdtab">评估</button><button class="cmdtab"><span><span class="latin">SOLIDWORKS</span> 插件</span></button><button class="cmdtab px-2"><span class="latin px-1">Simulation</span></button>
  <div class="hud d-flex align-items-center">
    <button aria-label="整屏显示全图"><svg class="ico"><use href="#zfit"/></svg></button><button aria-label="局部放大"><svg class="ico"><use href="#zarea"/></svg></button><button aria-label="上一视图"><svg class="ico"><use href="#prev"/></svg></button><button aria-label="剖面视图"><svg class="ico"><use href="#section"/></svg></button><button aria-label="动态注解"><svg class="ico"><use href="#dynann"/></svg></button>
    <button class="gap-2" aria-label="视图定向"><svg class="ico me-1"><use href="#orient"/></svg><svg class="tri opacity-75"><use href="#tri"/></svg></button>
    <button class="gap-2 ms-1" aria-label="显示样式"><svg class="ico"><use href="#dispst"/></svg><svg class="tri opacity-75"><use href="#tri"/></svg></button>
    <div class="eyebox d-flex"><button aria-label="隐藏所有类型"><svg class="ico mx-1"><use href="#eye"/></svg></button><button class="more" aria-label="隐藏选项"><svg class="tri"><use href="#tri"/></svg></button></div>
    <button aria-label="编辑外观"><svg class="ico"><use href="#balled"/></svg></button>
    <button class="gap-2" aria-label="应用布景"><svg class="ico me-1"><use href="#scene"/></svg><svg class="tri opacity-75"><use href="#tri"/></svg></button>
    <button class="gap-2" aria-label="视图设置"><svg class="ico me-1"><use href="#monitor"/></svg><svg class="tri opacity-75"><use href="#tri"/></svg></button>
    <button aria-label="3D 视图"><svg class="ico"><use href="#cube"/></svg></button>
  </div>
  <div class="docctl d-flex align-items-center ms-auto">
    <button aria-label="上一窗口"><svg class="ico"><use href="#pageL"/></svg></button><button aria-label="下一窗口"><svg class="ico"><use href="#pageR"/></svg></button><button aria-label="最小化文档"><svg class="ico"><use href="#wmin"/></svg></button><button aria-label="还原文档"><svg class="ico"><use href="#wres"/></svg></button><button aria-label="关闭文档"><svg class="ico"><use href="#wclose"/></svg></button>
  </div>
</div>

<main class="d-flex flex-grow-1" style="min-height:0">
  <aside class="sidebar d-flex flex-column flex-shrink-0">
    <div class="handle d-flex align-items-center justify-content-center"><span class="knob"></span></div>
    <div class="mgr d-flex">
      <button class="on" aria-label="FeatureManager"><svg class="ico"><use href="#asm"/></svg></button><button aria-label="PropertyManager"><svg class="ico"><use href="#props"/></svg></button><button aria-label="ConfigurationManager"><svg class="ico"><use href="#config"/></svg></button><button aria-label="DimXpertManager"><svg class="ico"><use href="#target"/></svg></button><button aria-label="DisplayManager"><svg class="ico"><use href="#ballfm"/></svg></button>
      <button class="expand" aria-label="展开"><svg width="20" height="20"><use href="#chev"/></svg></button>
    </div>
    <label class="filter d-flex align-items-center"><svg class="ico"><use href="#funnel"/></svg><svg class="tri mt-3"><use href="#tri"/></svg><input class="flex-grow-1" type="text" aria-label="过滤器"></label>
    <div class="d-flex flex-grow-1" style="min-height:0">
      <ul class="tree list-unstyled d-flex flex-column mb-0">
        <li class="d-flex align-items-center"><span class="tw"><svg><use href="#twist"/></svg></span><svg class="ico"><use href="#fHist"/></svg>History</li>
        <li class="d-flex align-items-center"><span class="tw"></span><svg class="ico"><use href="#fSens"/></svg>Sensors</li>
        <li class="d-flex align-items-center"><span class="tw"><svg><use href="#twist"/></svg></span><svg class="ico"><use href="#fAnn"/></svg>Annotations</li>
        <li class="d-flex align-items-center"><span class="tw"></span><svg class="ico"><use href="#fEq"/></svg>Equations</li>
        <li class="d-flex align-items-center"><span class="tw"></span><svg class="ico"><use href="#plane"/></svg>front</li>
        <li class="d-flex align-items-center"><span class="tw"></span><svg class="ico"><use href="#plane"/></svg>top</li>
        <li class="d-flex align-items-center"><span class="tw"></span><svg class="ico"><use href="#plane"/></svg>right</li>
        <li class="d-flex align-items-center"><span class="tw"></span><svg class="ico"><use href="#origin"/></svg>Origin</li>
        <li class="d-flex align-items-center"><span class="tw"><svg><use href="#twist"/></svg></span><svg class="ico"><use href="#part"/></svg>(固定) RevBracket_&amp;&lt;1&gt; -&gt;x? (Default) &lt;&lt;D</li>
        <li class="d-flex align-items-center"><span class="tw"><svg><use href="#twist"/></svg></span><svg class="ico"><use href="#part"/></svg>(-) Yoke_male_&amp;&lt;1&gt; (Default) &lt;&lt;Default&gt;_</li>
        <li class="d-flex align-items-center"><span class="tw"><svg><use href="#twist"/></svg></span><svg class="ico"><use href="#part"/></svg>(-) spider_&amp;&lt;1&gt; (Default) &lt;&lt;Default&gt;_Disp</li>
        <li class="d-flex align-items-center"><span class="tw"><svg><use href="#twist"/></svg></span><svg class="ico"><use href="#part"/></svg>(-) Yoke_female_&amp;&lt;1&gt; -&gt; (Default) &lt;&lt;Defa</li>
        <li class="d-flex align-items-center"><span class="tw"><svg><use href="#twist"/></svg></span><svg class="ico"><use href="#part"/></svg>(-) PIN_&amp;&lt;1&gt; (LONG) &lt;&lt;LONG&gt;_Display St</li>
        <li class="d-flex align-items-center"><span class="tw"><svg><use href="#twist"/></svg></span><svg class="ico"><use href="#part"/></svg>(-) PIN_&amp;&lt;2&gt; (SHORT) &lt;&lt;SHORT&gt;_Display</li>
        <li class="d-flex align-items-center"><span class="tw"><svg><use href="#twist"/></svg></span><svg class="ico"><use href="#part"/></svg>(-) PIN_&amp;&lt;3&gt; (SHORT) &lt;&lt;SHORT&gt;_Display</li>
        <li class="off d-flex align-items-center"><span class="tw"></span><svg class="ico"><use href="#partoff"/></svg>(-) One Piece Crank_&amp;&lt;1&gt; (Default)</li>
        <li class="d-flex align-items-center"><span class="tw"><svg><use href="#twist"/></svg></span><svg class="ico"><use href="#asm"/></svg>(-) full_crank-assy_&amp;&lt;1&gt; (Default) &lt;Default</li>
        <li class="d-flex align-items-center"><span class="tw"><svg><use href="#twist"/></svg></span><svg class="ico"><use href="#part"/></svg>base_plate&lt;3&gt; -&gt;x (Default) &lt;&lt;Default&gt;_D</li>
        <li class="d-flex align-items-center"><span class="tw"><svg><use href="#twist"/></svg></span><svg class="ico"><use href="#part"/></svg>Shaft&lt;1&gt; -&gt;? (Default) &lt;&lt;Default&gt;_Display</li>
        <li class="d-flex align-items-center"><span class="tw"><svg><use href="#twist"/></svg></span><svg class="ico"><use href="#mates"/></svg>Mates</li>
        <li class="d-flex align-items-center"><span class="tw"></span><svg class="ico"><use href="#planeb"/></svg>PLANE1</li>
        <li class="d-flex align-items-center"><span class="tw"></span><svg class="ico"><use href="#point"/></svg>Point1</li>
        <li class="d-flex align-items-center"><span class="tw"></span><svg class="ico"><use href="#coord"/></svg>Coordinate System1</li>
        <li class="d-flex align-items-center"><span class="tw"></span><svg class="ico"><use href="#point"/></svg>Point2</li>
        <li class="d-flex align-items-center"><span class="tw"></span><svg class="ico"><use href="#point"/></svg>Point3</li>
        <li class="d-flex align-items-center"><span class="tw"><svg><use href="#twist"/></svg></span><svg class="ico"><use href="#hole"/></svg>CSK for M6 Oval Head Machine Screw1</li>
        <li class="d-flex align-items-center"><span class="tw"></span><svg class="ico"><use href="#sketch"/></svg>Sketch4</li>
        <li class="d-flex align-items-center"><span class="tw"><svg><use href="#twist"/></svg></span><svg class="ico"><use href="#hole"/></svg>M8 Clearance Hole1</li>
        <li class="d-flex align-items-center"><span class="tw"></span><svg class="ico"><use href="#planeb"/></svg>PLANE2</li>
        <li class="d-flex align-items-center"><span class="tw"><svg><use href="#twist"/></svg></span><svg class="ico"><use href="#smart"/></svg>Smart Fastener1</li>
      </ul>
      <div class="vbar d-flex flex-column ms-auto">
        <button class="up" aria-label="向上"><svg width="18" height="18" viewBox="0 0 24 24"><use href="#chev" transform="rotate(-90 12 12)"/></svg></button>
        <div class="thumb flex-grow-1"></div>
        <button class="down" aria-label="向下"><svg width="18" height="18" viewBox="0 0 24 24"><use href="#chev" transform="rotate(90 12 12)"/></svg></button>
      </div>
    </div>
    <div class="hbar d-flex">
      <button aria-label="向左"><svg width="18" height="18" viewBox="0 0 24 24"><use href="#chev" transform="rotate(180 12 12)"/></svg></button>
      <div class="thumb"></div>
      <button class="ms-auto" aria-label="向右"><svg width="18" height="18"><use href="#chev"/></svg></button>
    </div>
    <div class="splitter d-flex align-items-center justify-content-center"><span class="knob"></span></div>
  </aside>

  <section class="view3d flex-grow-1 rim">
    <svg class="model" viewBox="0 0 1568 2800" preserveAspectRatio="none" stroke="#15202a" stroke-width="4" stroke-linejoin="round">
      <defs>
        <linearGradient id="mW"><stop offset="0" stop-color="#c4c4c4"/><stop offset=".3" stop-color="#f2f2f2"/><stop offset=".7" stop-color="#f4f2f2"/><stop offset="1" stop-color="#c2c2c2"/></linearGradient>
        <linearGradient id="mG"><stop offset="0" stop-color="#6f6f6f"/><stop offset=".25" stop-color="#b0b0b0"/><stop offset=".65" stop-color="#cfcfcf"/><stop offset="1" stop-color="#8d8d8d"/></linearGradient>
        <linearGradient id="mL"><stop offset="0" stop-color="#8f8f8f"/><stop offset=".25" stop-color="#d6d6d6"/><stop offset=".5" stop-color="#f0f0f0"/><stop offset=".75" stop-color="#e2e0e0"/><stop offset="1" stop-color="#b0b0b0"/></linearGradient>
        <linearGradient id="mE" x2="0" y2="1"><stop offset="0" stop-color="#6a6a6a"/><stop offset=".3" stop-color="#bdbdbd"/><stop offset=".7" stop-color="#d2d2d2"/><stop offset="1" stop-color="#6a6a6a"/></linearGradient>
        <linearGradient id="mS"><stop offset="0" stop-color="#b9b9dd"/><stop offset=".35" stop-color="#fafaff"/><stop offset=".7" stop-color="#eef"/><stop offset="1" stop-color="#b4b4d6"/></linearGradient>
        <linearGradient id="mB"><stop offset="0" stop-color="#12c8ff"/><stop offset=".5" stop-color="#0c9ee2"/><stop offset="1" stop-color="#10b8f6"/></linearGradient>
        <radialGradient id="mR" cx=".5" cy=".42" r=".6"><stop offset="0" stop-color="#f00000"/><stop offset=".75" stop-color="#ee0000"/><stop offset="1" stop-color="#8e0000"/></radialGradient>
        <radialGradient id="mH"><stop offset="0" stop-color="#ff5a4a"/><stop offset="1" stop-color="#f00000" stop-opacity="0"/></radialGradient>
        <radialGradient id="mP" cx=".4" cy=".4" r=".65"><stop offset="0" stop-color="#fff"/><stop offset=".6" stop-color="#efe8e5"/><stop offset="1" stop-color="#a59d9a"/></radialGradient>
      </defs>
      <path d="M1235 2235l50-120 20 148z" fill="#cfcfcf"/><path d="M1228 2238l60-18 17 43z" fill="#888"/>
      <path d="M1275 1106l55 16-45 45z" fill="#fff"/>
      <path d="M1285 1165l45-43v998q5 17 20 17l130-132v82l-165 170q-10 10-30-6z" fill="#9a9a9a"/>
      <path d="M1332 1963l148 42-130 130q-18-2-20-15z" fill="#fff"/>
      <path d="M900 1500l325-320 60 20v900H880L780 1880h125z" fill="#0a80c2" stroke="none"/>
      <path d="M1245 1195v650" fill="none"/>
      <path d="M450 1930l20-70 40 20v40z" fill="#14c3ff"/>
      <ellipse cx="1150" cy="1305" rx="56" ry="58" fill="url(#mP)"/>
      <path d="M1122 1330l12-28-20-8 18-6 34 10v10l-26 2-6 24z" fill="none"/>
      <ellipse cx="1132" cy="1880" rx="68" ry="75" fill="url(#mP)"/>
      <path d="M1090 1872l28 8 6-30 14 4-6 30 34 8-6 16-30-8-6 28-14-4 4-28-28-10z" fill="none"/>
      <path d="M875 1997l270 82-14 58-260-76z" fill="url(#mB)"/>
      <path d="M870 2060l260 76-28 115 33 12-50 40-225-70z" fill="#12c4ff"/>
      <path d="M1225 1112q60-60 60 60v927q-2 90-45 136l-140 140-265 185 10-82 245-168q38-20 55-80l100-392 5-640q-10-25-50 5L905 1525v-77z" fill="#05629b"/>
      <path d="M1212 1833l33 10-110 420-35-13z" fill="#0ad3ff"/>
      <path d="M540 2470l-20 240q10 20 62 20t60-20l18-220z" fill="url(#mS)"/>
      <path d="M120 2270l265-180 475 138 230 72 15 10-260 168z" fill="#10b2ff"/>
      <path d="M120 2270l725 208-10 82-720-212z" fill="#0d96ea"/>
      <path d="M415 1350v515h80l10-200 265 15 10 210h100q25-10 25-40V1400z" fill="url(#mG)"/>
      <path d="M410 1705q-6 40 2 85" fill="none" stroke="#7a4a10" stroke-width="7"/>
      <path d="M905 1715q-30 30-20 120h18q10-60 2-120z" fill="#b3680e"/>
      <path d="M430 1680q2-55 40-58l45 5v170l-12 65q-40 5-75-5z" fill="url(#mE)"/>
      <path d="M770 1650l40-2q35 8 38 50l2 200q-35 10-65-8z" fill="url(#mE)"/>
      <path d="M432 1680l75 5M430 1802l75 3M778 1710l70 6M780 1832l70 4M503 1635l-8 220" fill="none"/>
      <path d="M512 1632q120 35 255 10l5 290-15 15-242-2z" fill="#ffee00"/>
      <path d="M515 1660l255 26" fill="none"/>
      <path d="M768 1680l12 200-15 65-15 0z" fill="#b8a80a"/>
      <path d="M780 1890q40 20 70 90l30 40-20 60-40 10-78-40-4-110z" fill="#fff"/>
      <path d="M745 1965l110 12M800 1900q20 50 60 80M815 1900q15 50 50 85" fill="none"/>
      <path d="M395 1975q15-40 70-55l35-10-5 90-60 30z" fill="#fff"/>
      <path d="M522 1755c10-95 228-105 236 60l-20-10H530z" fill="#eee"/>
      <path d="M375 2235l12-200 8-45q2 30 20 35c60-10 80-50 80-110l17-110c5-95 230-110 238 30l-3 150q20 75 75 95l60-70-15 230c-40 130-450 130-492 -5z" fill="url(#mL)"/>
      <path d="M395 1980l20 45c70-20 80-60 82-115-50 10-90 20-102 70zM750 1985c10 50 40 85 75 95l50-60q10-30-12-52z" fill="#fff"/>
      <ellipse cx="622" cy="1847" rx="62" ry="63" fill="#f79d0c"/>
      <path d="M510 902l735 178 30 20-50 12L560 925z" fill="#1198e0"/>
      <path d="M187 1243l718 207v78l-722-213z" fill="#0b80c4"/>
      <path d="M190 1243L510 905l50 20 665 187-320 338z" fill="#14c3ff"/>
      <path d="M537 1085q0-85 45-110h160q42 30 42 110v140c-20 75-225 75-247 0z" fill="url(#mW)"/>
      <path d="M537 1085q0-85 45-110h160q42 30 42 110c-20 55-225 55-247 0z" fill="#f8f5f5"/>
      <path d="M555 1020c20 68 190 68 210 0" fill="none"/>
      <path d="M578 880h163v115c-20 35-143 35-163 0z" fill="url(#mW)"/>
      <ellipse cx="640" cy="1207" rx="16" ry="15" fill="#fff"/>
      <path d="M655 350L522 822l240 20L900 350z" fill="#fff"/>
      <path d="M905 340l10 50L768 892l-6 24v-74z" fill="#666"/>
      <path d="M520 822l242 20v75l-242-20z" fill="#b5b5b5"/>
      <path d="M604 795q-45-25-15-55c35-28 105-28 140 0q25 30-20 62z" fill="#fff" stroke-width="7"/>
      <path d="M712 365q10 35 62 36t62-36z" fill="#c20000"/>
      <path d="M571 232C571 40 979 40 979 232c0 70-80 145-205 145S571 302 571 232z" fill="url(#mR)"/>
      <ellipse cx="780" cy="290" rx="100" ry="35" fill="url(#mH)" stroke="none"/>
      <ellipse cx="775" cy="178" rx="145" ry="79" fill="#ee0000" stroke-width="3"/>
    </svg>
    <svg class="pointer" viewBox="0 0 86 86"><circle cx="43" cy="43" r="39.500" fill="none" stroke="#e8131b" stroke-width="7"/><path d="M15 31v25l6-5 4 8 4-2-4-8h7z" fill="#fff" stroke="#333" stroke-width="1.500"/></svg>
    <svg class="triad" viewBox="0 0 110 112"><path d="M39 72V30" stroke="#118a22" stroke-width="5"/><path d="M39 14l6 17H33z" fill="#0a5f16"/><path d="M39 72l34 9" stroke="#a11" stroke-width="5"/><path d="M86 84l-18 3 3-11z" fill="#c00d0d"/><path d="M39 72L25 88" stroke="#11a" stroke-width="5"/><path d="M16 97l4-14 11 9z" fill="#0808b0"/><path d="M37 0l4 5 4-5M41 5v6" fill="none" stroke="#555" stroke-width="1.500"/><path d="M93 78l8 9m0-9l-8 9" fill="none" stroke="#e06a6a" stroke-width="1.500"/><path d="M9 93h9l-9 9h9" fill="none" stroke="#5555dd" stroke-width="1.500"/></svg>
    <div class="viewname">*上下二等角轴测</div>
    <div class="taskpane d-flex flex-column">
      <button aria-label="资源"><svg class="ico"><use href="#home"/></svg></button><button aria-label="设计库"><svg class="ico"><use href="#books"/></svg></button><button aria-label="文件探索器"><svg class="ico"><use href="#fold2"/></svg></button><button aria-label="视图调色板"><svg class="ico"><use href="#palette"/></svg></button><button aria-label="外观"><svg class="ico"><use href="#ball"/></svg></button><button aria-label="自定义属性"><svg class="ico"><use href="#props"/></svg></button><button aria-label="论坛"><svg class="ico"><use href="#forum"/></svg></button>
    </div>
  </section>
</main>

<div class="watermark d-flex" aria-hidden="true">
  <span class="hw"><b>High</b>wah</span><span class="reg">®</span>
  <span class="cn d-flex"><span>兴</span><span>华</span><span>学</span><span>院</span></span>
</div>

<div class="sheets d-flex flex-shrink-0 rim">
  <div class="nav4 d-flex"><button aria-label="首个"><svg width="16" height="16" viewBox="0 0 16 16" fill="currentColor"><path d="M2 1h2v14H2zM14 1v14L5 8z"/></svg></button><button aria-label="上一个"><svg width="16" height="16" viewBox="0 0 16 16" fill="currentColor"><path d="M12 1v14L3 8z"/></svg></button><button aria-label="下一个"><svg width="16" height="16" viewBox="0 0 16 16" fill="currentColor"><path d="M4 1v14l9-7z"/></svg></button><button aria-label="末个"><svg width="16" height="16" viewBox="0 0 16 16" fill="currentColor"><path d="M12 1h2v14h-2zM2 1v14l9-7z"/></svg></button></div>
  <button class="sheet on">模型</button><button class="sheet"><span>3D <span class="cj">视图</span></span></button><button class="sheet">Motion Study 1</button><button class="sheet pe-4"><svg width="20" height="20" viewBox="0 0 20 20" fill="none" stroke="#333" stroke-width="1.600"><path d="M2 2v10M5 1v8M8 4v8l3-6 3 8"/><path d="M11 9l5 9H9z" fill="#e8d83a" stroke="none"/></svg>stress analysis</button>
</div>
<footer class="statusbar d-flex align-items-center flex-shrink-0">
  <span>SOLIDWORKS Premium 2024 SP5.0</span>
  <span class="cj ms-auto me-4">欠定义</span><span class="cj">在编辑 装配体</span>
  <span class="cj custom">自定义</span>
  <svg class="tri mx-4 ms-4" viewBox="0 0 8 7"><path d="M0 7h8L4 0z" fill="#444"/></svg>
  <button class="ms-3 me-1" aria-label="标签"><svg width="24" height="22"><use href="#tag"/></svg></button>
</footer>

<script src="https://cdn.jsdelivr.net/npm/bootstrap@5.3.0/dist/js/bootstrap.bundle.min.js"></script>
</body>
</html>
